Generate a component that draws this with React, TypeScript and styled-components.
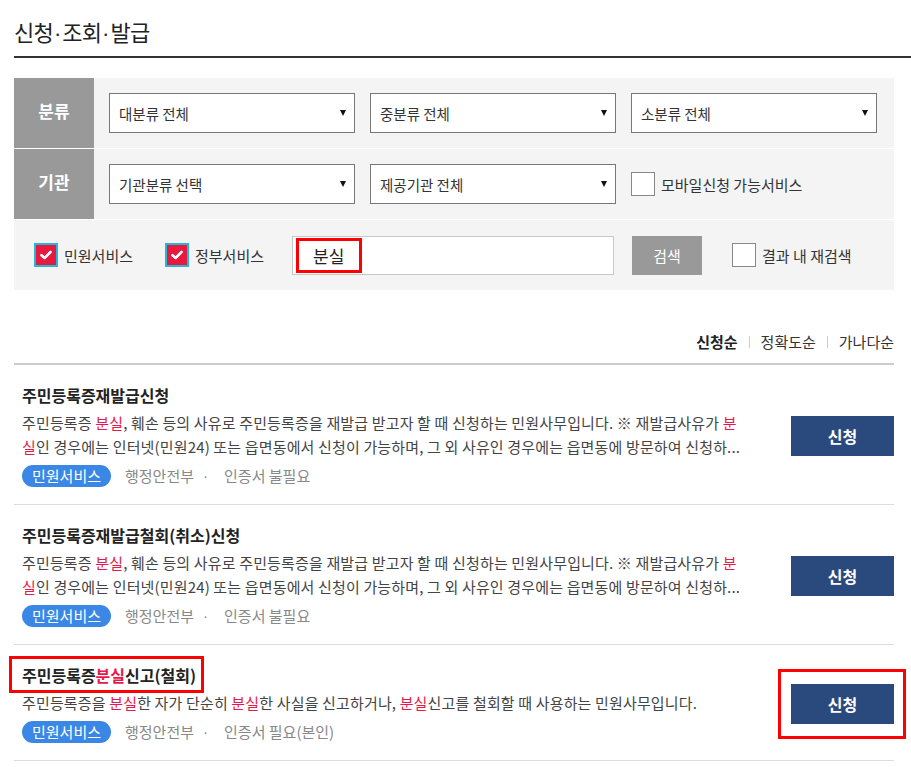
import React from 'react';
import styled, { createGlobalStyle } from 'styled-components';

const GlobalStyle = createGlobalStyle`
  html, body { margin: 0; padding: 0; background: #fff; }
  body { font-family: "Noto Sans CJK KR", "Noto Sans", sans-serif; color: #333; }
  * { box-sizing: border-box; }
`;

const Page = styled.div`
  width: 911px;
  padding: 0 17px 0 14px;
  overflow: hidden;
`;

const Header = styled.div`
  margin-right: -17px;
  padding: 16px 0 10px;
  border-bottom: 2px solid #333;
`;

const PageTitle = styled.h2`
  margin: 0;
  height: 30px;
  font-size: 22px;
  line-height: 30px;
  font-weight: 400;
  color: #222;
  letter-spacing: -0.8px;
`;

const NarrowDot = styled.span`
  font-family: "Liberation Sans", sans-serif;
  letter-spacing: 0;
  line-height: 0;
  margin: 0 1px;
`;

const Filter = styled.div`
  margin-top: 20px;
  background: #f4f4f4;
`;

const FilterRow = styled.div<{ $last?: boolean }>`
  display: flex;
  height: ${(p) => (p.$last ? 70 : 71)}px;
  border-bottom: ${(p) => (p.$last ? 'none' : '1px solid #fff')};
`;

const RowLabel = styled.div`
  width: 80px;
  flex: none;
  background: #999;
  color: #fff;
  font-size: 17px;
  font-weight: 700;
  display: flex;
  align-items: center;
  justify-content: center;
  padding-bottom: 6px;
`;

const RowBody = styled.div`
  display: flex;
  align-items: center;
  padding-left: 15px;
  gap: 15px;
`;

const SelectBox = styled.div`
  width: 246px;
  height: 40px;
  border: 1px solid #777;
  background: #fff;
  display: flex;
  align-items: center;
  justify-content: space-between;
  padding: 0 8px 0 9px;
  font-size: 14.5px;
  color: #333;
`;

const Arrow = styled.span`
  width: 0;
  height: 0;
  border-left: 3px solid transparent;
  border-right: 3px solid transparent;
  border-top: 6px solid #111;
`;

const CheckLabel = styled.label<{ $gapAfter?: number }>`
  display: inline-flex;
  align-items: center;
  gap: 6px;
  font-size: 15px;
  color: #333;
  margin-right: ${(p) => p.$gapAfter ?? 0}px;
`;

const Box = styled.span<{ $checked?: boolean }>`
  width: 24px;
  height: 24px;
  flex: none;
  display: inline-flex;
  align-items: center;
  justify-content: center;
  background: ${(p) => (p.$checked ? '#e8193f' : '#fff')};
  border: ${(p) => (p.$checked ? '2px solid #22b8d8' : '1px solid #888')};
`;

const SearchRow = styled.div`
  display: flex;
  align-items: center;
  padding-left: 20px;
  width: 100%;
`;

const SearchInput = styled.div`
  width: 322px;
  height: 39px;
  background: #fff;
  border: 1px solid #c8c8c8;
  display: flex;
  align-items: center;
  padding-left: 20px;
  font-size: 17px;
  color: #222;
`;

const Query = styled.span`
  position: relative;
`;

const Annot = styled.span<{ $t: number; $r: number; $b: number; $l: number }>`
  position: absolute;
  top: ${(p) => p.$t}px;
  right: ${(p) => p.$r}px;
  bottom: ${(p) => p.$b}px;
  left: ${(p) => p.$l}px;
  border: 3px solid #f00;
  pointer-events: none;
`;

const SearchButton = styled.button`
  width: 70px;
  height: 39px;
  margin-left: 18px;
  margin-right: 30px;
  border: 0;
  background: #999;
  color: #fff;
  font-family: inherit;
  font-size: 15px;
  padding: 0;
`;

const SortBar = styled.div`
  display: flex;
  justify-content: flex-end;
  align-items: center;
  padding: 42px 0 11px;
  border-bottom: 2px solid #ccc;
  font-size: 15px;
  line-height: 20px;
`;

const SortItem = styled.span<{ $active?: boolean }>`
  color: ${(p) => (p.$active ? '#222' : '#333')};
  font-weight: ${(p) => (p.$active ? 700 : 400)};
`;

const SortSep = styled.span`
  width: 1px;
  height: 12px;
  background: #ccc;
  margin: 0 11px;
`;

const Item = styled.div`
  display: flex;
  align-items: center;
  padding: 20px 0 17px 8px;
  border-bottom: 1px solid #ddd;
`;

const ItemBody = styled.div`
  flex: 1;
  min-width: 0;
`;

const ItemTitle = styled.div`
  position: relative;
  width: fit-content;
  font-size: 16px;
  line-height: 20px;
  font-weight: 700;
  color: #222;
`;

const Desc = styled.div`
  margin-top: 6px;
  font-size: 15px;
  letter-spacing: 0.15px;
  line-height: 24px;
  color: #444;
  white-space: nowrap;
`;

const Hl = styled.span`
  color: #e6194b;
`;

const Meta = styled.div`
  margin-top: 6px;
  height: 22px;
  display: flex;
  align-items: center;
  font-size: 15px;
  line-height: 22px;
  color: #888;
`;

const Pill = styled.span`
  height: 22px;
  padding: 0 10px;
  border-radius: 11px;
  background: #3b87e5;
  color: #fff;
  display: inline-flex;
  align-items: center;
  margin-right: 14px;
`;

const Dot = styled.span`
  font-family: "Liberation Sans", sans-serif;
  margin: 0 16px 0 9px;
`;

const ApplyWrap = styled.div`
  position: relative;
  flex: none;
`;

const ApplyButton = styled.button`
  width: 103px;
  height: 40px;
  border: 0;
  background: #2a4a7d;
  color: #fff;
  font-family: inherit;
  font-size: 16px;
  font-weight: 700;
  padding: 0;
  display: block;
`;

const Check = () => (
  <svg width="14" height="14" viewBox="0 0 14 14">
    <path d="M2.5 7.2 L5.6 10 L11.5 4" stroke="#fff" strokeWidth="2.6" fill="none" strokeLinecap="round" strokeLinejoin="round" />
  </svg>
);

const Select = ({ label }: { label: string }) => (
  <SelectBox>
    <span>{label}</span>
    <Arrow />
  </SelectBox>
);

type Result = {
  title: React.ReactNode;
  lines: React.ReactNode[];
  cert: string;
  marked?: boolean;
};

const longLines = [
  <>
    주민등록증 <Hl>분실</Hl>, 훼손 등의 사유로 주민등록증을 재발급 받고자 할 때 신청하는 민원사무입니다. ※ 재발급사유가 <Hl>분</Hl>
  </>,
  <>
    <Hl>실</Hl>인 경우에는 인터넷(민원24) 또는 읍면동에서 신청이 가능하며, 그 외 사유인 경우에는 읍면동에 방문하여 신청하...
  </>,
];

const results: Result[] = [
  { title: '주민등록증재발급신청', lines: longLines, cert: '인증서 불필요' },
  { title: '주민등록증재발급철회(취소)신청', lines: longLines, cert: '인증서 불필요' },
  {
    title: (
      <>
        주민등록증<Hl>분실</Hl>신고(철회)
      </>
    ),
    lines: [
      <>
        주민등록증을 <Hl>분실</Hl>한 자가 단순히 <Hl>분실</Hl>한 사실을 신고하거나, <Hl>분실</Hl>신고를 철회할 때 사용하는 민원사무입니다.
      </>,
    ],
    cert: '인증서 필요(본인)',
    marked: true,
  },
];

export default function App() {
  return (
    <>
      <GlobalStyle />
      <Page>
        <Header>
          <PageTitle>
            신청<NarrowDot>·</NarrowDot>조회<NarrowDot>·</NarrowDot>발급
          </PageTitle>
        </Header>

        <Filter>
          <FilterRow>
            <RowLabel>분류</RowLabel>
            <RowBody>
              <Select label="대분류 전체" />
              <Select label="중분류 전체" />
              <Select label="소분류 전체" />
            </RowBody>
          </FilterRow>
          <FilterRow>
            <RowLabel>기관</RowLabel>
            <RowBody>
              <Select label="기관분류 선택" />
              <Select label="제공기관 전체" />
              <CheckLabel>
                <Box />
                모바일신청 가능서비스
              </CheckLabel>
            </RowBody>
          </FilterRow>
          <FilterRow $last>
            <SearchRow>
              <CheckLabel $gapAfter={32}>
                <Box $checked>
                  <Check />
                </Box>
                민원서비스
              </CheckLabel>
              <CheckLabel $gapAfter={28}>
                <Box $checked>
                  <Check />
                </Box>
                정부서비스
              </CheckLabel>
              <SearchInput>
                <Query>
                  분실
                  <Annot $t={-5} $r={-18} $b={-5} $l={-17} />
                </Query>
              </SearchInput>
              <SearchButton>검색</SearchButton>
              <CheckLabel>
                <Box />
                결과 내 재검색
              </CheckLabel>
            </SearchRow>
          </FilterRow>
        </Filter>

        <SortBar>
          <SortItem $active>신청순</SortItem>
          <SortSep />
          <SortItem>정확도순</SortItem>
          <SortSep />
          <SortItem>가나다순</SortItem>
        </SortBar>

        {results.map((r, i) => (
          <Item key={i}>
            <ItemBody>
              <ItemTitle>
                {r.title}
                {r.marked && <Annot $t={-9} $r={-8} $b={-8} $l={-13} />}
              </ItemTitle>
              <Desc>
                {r.lines.map((l, j) => (
                  <div key={j}>{l}</div>
                ))}
              </Desc>
              <Meta>
                <Pill>민원서비스</Pill>
                행정안전부<Dot>·</Dot>
                {r.cert}
              </Meta>
            </ItemBody>
            <ApplyWrap>
              <ApplyButton>신청</ApplyButton>
              {r.marked && <Annot $t={-15} $r={-12} $b={-15} $l={-13} />}
            </ApplyWrap>
          </Item>
        ))}
      </Page>
    </>
  );
}
